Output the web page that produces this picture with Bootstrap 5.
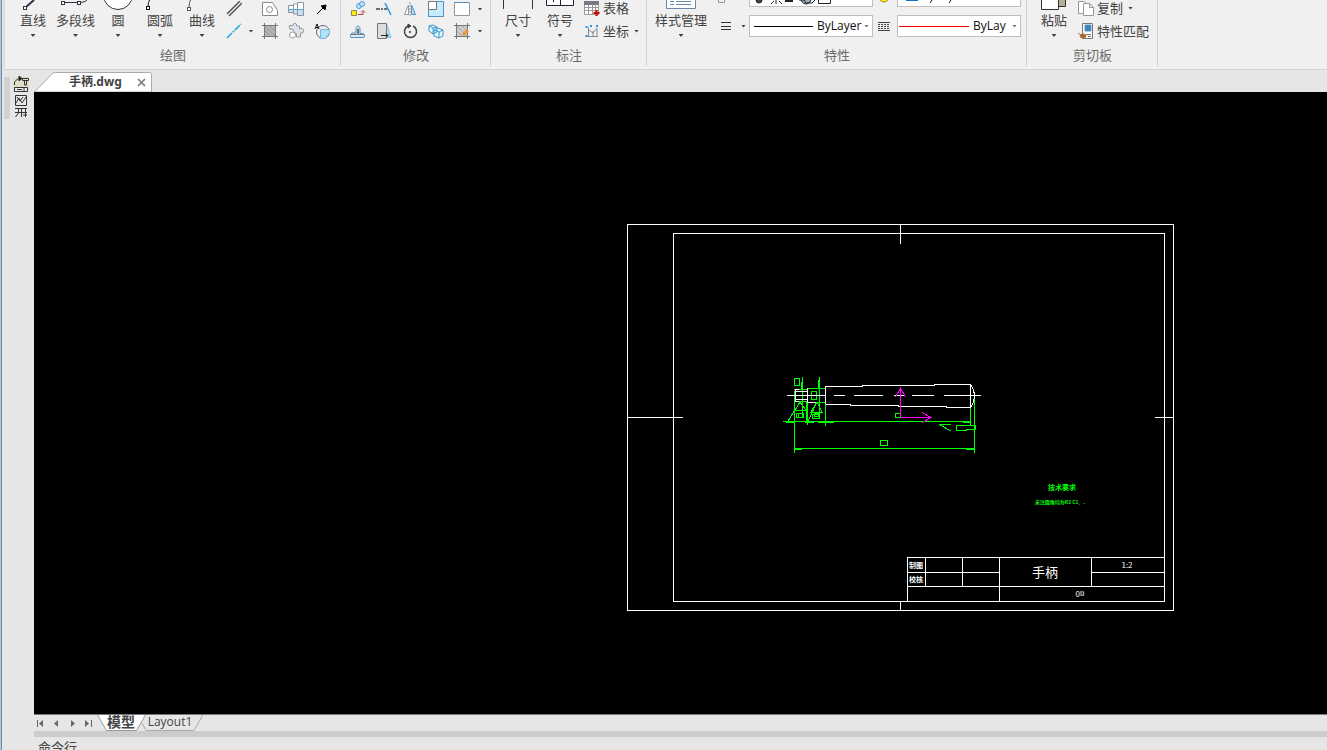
<!DOCTYPE html>
<html lang="zh-CN">
<head>
<meta charset="utf-8">
<meta name="viewport" content="width=device-width, initial-scale=1">
<title>手柄.dwg</title>
<link href="https://cdn.jsdelivr.net/npm/bootstrap@5.3.0/dist/css/bootstrap.min.css" rel="stylesheet">
<style>
body{font:13px/18px "Open Sans","Noto Sans CJK SC",sans-serif;color:#444;background:#e6e6e6}
.app{border-left:1px solid #a9c8f0}
.frame{border-left:1px solid #7c8793}
.ribbon{background:#f0f0f0;border-bottom:1px solid #d4d4d4;border-left:1px solid #d4d4d4;height:70px;margin-left:2px}
.group{position:relative;height:66px;font-family:"Noto Sans CJK SC",sans-serif}
.group::after{content:"";width:1px;height:66px;background:#d2d2d2;position:absolute;right:0;top:0}
.tools{height:46px}
.caption{color:#6a6a6a;text-align:center;line-height:18px}
button{border:0;background:transparent;padding:0;color:#444}
button:hover{background:#dce9f7}
.big{width:42px;display:flex;flex-direction:column;align-items:center;white-space:nowrap}
.big svg{display:block;height:11px;flex:none}
.caret{width:5px;height:3px;background:#444;clip-path:polygon(0 0,100% 0,50% 100%);display:block;flex:none}
.big .caret{margin-top:5px}
.rows{display:grid;grid-template-rows:20px 22px}
.line{display:flex;align-items:flex-start}
.line + .line{align-items:center}
.tool{width:26px;height:18px;display:flex;justify-content:center;align-items:center}
.tool.slim{width:22px}
.drop{width:12px;height:18px;display:flex;justify-content:center;align-items:center}
.wide{display:flex;align-items:center;gap:3px;height:16px;line-height:16px;white-space:nowrap}
.wide .caret{margin-left:2px}
.rows svg{width:16px;height:16px;display:block}
.combo{width:124px;height:22px;border:1px solid #bfbfbf;background:#fff;display:flex;align-items:center;padding:0 3px 0 4px}
.combo select{appearance:none;border:0;background:transparent;padding:0;font:12px/18px "Open Sans",sans-serif;color:#111;min-width:0;outline:0}
.combo.cut{height:7px;border-top:0}
.combo .caret{background:#777;margin-left:auto}
.combo.color{padding-left:1px}
.sample{height:1px;flex:none;margin-right:4px}
.side{width:32px}
.grip{width:6px;height:42px;background:#d2d2d2;margin:7px 2px 0 2px}
.filetab{width:118px;height:20px;margin-top:2px;position:relative;color:#444;font:bold 12px/20px "Noto Sans","Noto Sans CJK SC",sans-serif}
.shape{position:absolute;left:0;top:0}
.filetab a,.filetab button{position:relative;color:#444}
.canvas{background:#000;min-height:0}
.sheets{height:17px;border-top:1px solid #777}
.navs button{width:16px;height:16px;display:flex;align-items:center;justify-content:center}
.sheet{position:relative;display:block;height:16px;color:#444;text-decoration:none;text-align:center;line-height:14px;font-size:12px}
.sheet span{position:relative}
.model{width:50px;margin-left:1px;font:bold 14px/12px "Noto Sans CJK SC",sans-serif;z-index:1;padding-right:2px}
.layout{width:62px;margin-left:-6px;padding-right:4px}
.split{height:6px;background:#ccc}
.command{height:13px;padding:1px 4px;font-family:"Noto Sans CJK SC",sans-serif;overflow:hidden;line-height:18px}
.g{stroke:#0f0}.w{stroke:#fff}.m{stroke:#f0f}
</style>
</head>
<body class="overflow-hidden">
<div class="app vh-100"><div class="frame h-100 d-flex flex-column">
<header class="ribbon d-flex flex-shrink-0 overflow-hidden">
  <section class="group" style="width:336px">
    <div class="tools d-flex" style="padding-left:7px">
      <button class="big"><svg width="28" height="11" fill="none" stroke="#334"><path d="M7 7 15 0" stroke-width="2"/><rect x="4.500" y="6.500" width="3" height="3" fill="#fff"/></svg>直线<i class="caret"></i></button>
      <button class="big" style="width:43px"><svg width="32" height="11" fill="none" stroke="#334"><path d="M3 2.500H20Q26 2.500 28-1"/><rect x="1.500" y="1.500" width="3" height="3" fill="#fff"/><rect x="17.500" y="1.500" width="3" height="3" fill="#fff"/></svg>多段线<i class="caret"></i></button>
      <button class="big"><svg width="32" height="11"><circle cx="16" cy="-5" r="14.500" fill="#fff" stroke="#334"/></svg>圆<i class="caret"></i></button>
      <button class="big"><svg width="32" height="11" fill="none" stroke="#111"><path d="M4 7Q4 2 6-1"/><rect x="2.500" y="6.500" width="3" height="3" fill="#fff"/></svg>圆弧<i class="caret"></i></button>
      <button class="big"><svg width="32" height="11" fill="none" stroke="#556"><path d="M3 7Q3 2 5-1"/><rect x="1.500" y="7.500" width="3" height="3" fill="#fff"/></svg>曲线<i class="caret"></i></button>
      <div class="rows">
        <div class="line">
          <button class="tool slim" aria-label="平行线"><svg viewBox="0 0 16 16" stroke="#555" stroke-width="1.500"><path d="M1 13 14 0M3 15 16 2"/></svg></button><span class="drop"></span>
          <button class="tool" aria-label="轮廓"><svg viewBox="0 0 16 16" fill="#fff" stroke="#888"><path d="M.5 14.500v-13h10l5 8v5z"/><circle cx="7.500" cy="8.500" r="3"/></svg></button>
          <button class="tool" aria-label="轴"><svg viewBox="0 0 16 16" fill="#cfe0f0" stroke="#8a93a0"><path d="M.5 4.500h5v7h-5zM5.500 3h4v10h-4zM9.500 1.500h6v13h-6z"/><path d="M1 5h4v3H1zM6 3.500h3V8H6zM10 2h5v6h-5z" fill="#fff" stroke="none"/><path d="M0 8.500h16" stroke="#5aa5dc"/></svg></button>
          <button class="tool" aria-label="箭头"><svg viewBox="0 0 16 16" stroke="#000"><path d="M3 13 10 6"/><path d="M12 4 7 5l4 4z"/></svg></button>
        </div>
        <div class="line">
          <button class="tool slim" aria-label="中心线"><svg viewBox="0 0 16 16" stroke="#16a5e0" stroke-width="1.500" stroke-dasharray="7 1 2 1"><path d="M1 15 15 1"/></svg></button><button class="drop" aria-label="更多线"><i class="caret"></i></button>
          <button class="tool" aria-label="剖面线"><svg viewBox="0 0 16 16" stroke="#777" fill="#b4b4b4"><path d="M2.500 2.500h11v11h-11zM0 2.500h16M0 13.500h16M2.500 0v16M13.500 0v16"/><path d="m3 3 10 10M3 8l5 5M8 3l5 5" stroke="#999"/></svg></button>
          <button class="tool" aria-label="零件"><svg viewBox="0 0 16 16" fill="#dce3ec" stroke="#999"><path d="M1.500 5V2.500H5Q5-1 8.500 1V3h3v3q4-2 4 2 0 3-3 2v4H8.500v-3Q5 8 4.500 6 1 7 1.500 5z"/><circle cx="4.500" cy="12" r="3" fill="#fff"/></svg></button>
          <button class="tool" aria-label="局部放大"><svg viewBox="0 0 16 16" fill="none" stroke="#667"><circle cx="9" cy="9" r="6.500"/><path d="M6.500 6.500h9v4l-4 5h-5z" fill="#b5e1f8" stroke="#7bb9dc"/><path d="M1 6 3 1l2 5M2 4.500h2" stroke="#111"/></svg></button>
        </div>
      </div>
    </div>
    <div class="caption">绘图</div>
  </section>

  <section class="group" style="width:150px">
    <div class="tools d-flex" style="padding-left:4px"><div class="rows">
      <div class="line">
        <button class="tool" aria-label="复制"><svg viewBox="0 0 16 16" fill="#bfe0fa" stroke="#4b9fd8"><circle cx="9" cy="5" r="2.500"/><circle cx="12" cy="3" r="2.500"/><path d="M1.500 9.500h5v5h-5z" fill="#fe0" stroke="#886"/><path d="M8 13.500h5v-3m-2 1 2-2 2 2" fill="none" stroke="#a43"/></svg></button>
        <button class="tool" aria-label="延伸"><svg viewBox="0 0 16 16" fill="none" stroke="#444"><path d="M0 8h4m1 0h2m1 0h3" stroke-width="1.500"/><path d="M9 2 15 14" stroke="#2893df" stroke-width="1.500"/></svg></button>
        <button class="tool" aria-label="镜像"><svg viewBox="0 0 16 16" fill="#fff" stroke="#999"><path d="M6.500 4v9.500h-4z"/><path d="M9.500 4v9.500h4z" fill="#b5dcf5" stroke="#5195c0"/><path d="M8 1v14" stroke-dasharray="2 1"/></svg></button>
        <button class="tool" aria-label="缩放"><svg viewBox="0 0 16 16" fill="#c6ebff" stroke="#5592bd"><path d="M.5.5h15v15H.5z"/><path d="M.5.5h8v8h-8z" fill="#fff" stroke="#777"/></svg></button>
        <button class="tool" aria-label="矩形"><svg viewBox="0 0 16 16" fill="#fff" stroke="#777"><path d="M.5 1.500h15v13H.5z" stroke="#999"/><path d="M.5 1.500h15" stroke="#338bc5" stroke-dasharray="2 1"/></svg></button>
        <button class="drop" style="width:10px" aria-label="更多修改"><i class="caret"></i></button>
      </div>
      <div class="line">
        <button class="tool" aria-label="偏移"><svg viewBox="0 0 16 16" fill="#d5edfb" stroke="#5592bd"><path d="M1 14.500h13q2-3-1-4h-3V5Q8 1 6 5v5H2q-3 2-1 4.500z"/><path d="M1 11.500h6.500V6h1v5.500H14" stroke="#777" fill="none"/></svg></button>
        <button class="tool" aria-label="拉伸"><svg viewBox="0 0 16 16" fill="#b5e3fb" stroke="#67a"><path d="M7 1.500h4l4 13H7z" stroke="#7cc3e8"/><path d="M1.500.5h9v15h-9z" fill="#ddd" stroke="#777"/><path d="M5 12.500h7m-2-2 2 2-2 2" stroke="#222" fill="none"/></svg></button>
        <button class="tool" aria-label="旋转"><svg viewBox="0 0 16 16" fill="none" stroke="#444" stroke-width="1.500"><path d="M6 3a6 6 0 1 0 5 0"/><path d="M6 1v4l3-2z" fill="#333" stroke-width="1"/><circle cx="8" cy="9" r="1" fill="#333" stroke="none"/></svg></button>
        <button class="tool" aria-label="阵列"><svg viewBox="0 0 16 16" fill="#e5f6ff" stroke="#3998d2"><path d="m1 3 4-1 4 2v5l-4 2-4-3zM1 3l4 2v6M5 5l4-1M6 7l4-2 5 2v6l-4 2-5-2zM6 7l5 2v6M11 9l4-2"/></svg></button>
        <button class="tool" aria-label="编辑填充"><svg viewBox="0 0 16 16" stroke="#777" fill="#ccc"><path d="M2.500 2.500h11v11h-11zM0 2.500h16M0 13.500h16M2.500 0v16M13.500 0v16"/><path d="M3 3l10 10M3 8l5 5M8 3l5 5" stroke="#aaa"/><path d="m9 12 5-5" stroke="#e59b2d" stroke-width="3"/></svg></button>
        <button class="drop" style="width:10px" aria-label="更多编辑"><i class="caret"></i></button>
      </div>
    </div></div>
    <div class="caption">修改</div>
  </section>

  <section class="group" style="width:156px">
    <div class="tools d-flex" style="padding-left:6px">
      <button class="big"><svg width="32" height="11" stroke="#334"><path d="M1.500 0v9M30.500 0v9"/></svg>尺寸<i class="caret"></i></button>
      <button class="big"><svg width="28" height="11" fill="#fff" stroke="#223"><path d="M.5-3v8.500h27V-3M7.500 0v2M14.500 0v5"/></svg>符号<i class="caret"></i></button>
      <div class="rows" style="margin-left:3px">
        <div class="line"><button class="wide"><svg viewBox="0 0 16 16" fill="#fff" stroke="#999"><path d="M.5 1.500h14v13H.5zM.5 7.500h14M.5 10.500h14M4.500 4v10M8.500 4v10M11.500 4v10"/><path d="M0 1h15v4H0z" fill="#778" stroke="none"/><path d="M12.500 10v6M9.500 13h6" stroke="#c00" stroke-width="2"/></svg>表格</button></div>
        <div class="line"><button class="wide"><svg viewBox="0 0 16 16" fill="none" stroke="#888"><path d="M4.500 4v9M2 13.500h12M5 7l4 3 4-5M9 8v6M13 6v8"/><path d="M2.500 3v2M7 2v2M13 2v2M2.500 12v2" stroke="#2893df" stroke-width="2"/></svg>坐标<i class="caret"></i></button></div>
      </div>
    </div>
    <div class="caption">标注</div>
  </section>

  <section class="group" style="width:380px">
    <div class="tools d-flex" style="padding-left:4px">
      <button class="big" style="width:60px"><svg width="30" height="11" fill="#fff" stroke="#6b88a5"><path d="M.5-3V8.500h29V-3M4 1.500h4M10 1.500h15M4 4.500h4M10 4.500h15"/></svg>样式管理<i class="caret"></i></button>
      <div class="d-flex flex-column" style="width:38px">
        <svg width="30" height="15" fill="none" stroke="#999"><path d="M7.500 0v2.500h6V0"/></svg>
        <div class="d-flex"><button class="tool" style="width:30px;height:22px" aria-label="线宽"><svg width="10" height="10" stroke="#333"><path d="M0 1.500h10M0 5.500h10M0 8.500h10"/></svg></button><button class="drop" style="width:5px;height:22px" aria-label="线宽选项"><i class="caret"></i></button></div>
      </div>
      <div class="d-flex flex-column gap-2">
        <div class="d-flex"><div class="combo cut"><svg width="80" height="6" stroke="#222" fill="#9ab"><circle cx="5" cy="0" r="3" fill="#444"/><path d="M17 4l3-3m5 0 3 3M22 0v4"/><path d="M31 1h8" stroke-width="2"/><circle cx="52" cy="-1" r="5"/><path d="M45 0h5l2 3h6l3-3" fill="none"/><path d="M64.500-3v6.500h12V-3" fill="#fff"/></svg></div>
          <svg width="24" height="7"><circle cx="11" cy="-3" r="5" fill="#fe0" stroke="#a83"/></svg>
          <div class="combo cut"><svg width="80" height="6" stroke="#111" fill="none"><path d="M4 0h12" stroke="#1070d0" stroke-width="2"/><path d="m28 3 2-3M47 3l2-3"/></svg></div></div>
        <div class="d-flex align-items-center"><div class="combo"><span class="sample" style="background:#000;width:59px"></span><select aria-label="线型" style="width:45px"><option>ByLayer</option></select><i class="caret"></i></div>
          <svg width="24" height="14" stroke="#444"><path d="M5 3.500h12M5 11.500h12"/><path d="M5 5.500h12M5 7.500h12M5 9.500h12" stroke-dasharray="2 1"/></svg>
          <div class="combo color"><span class="sample" style="background:red;width:70px"></span><select aria-label="颜色" style="width:33px"><option>ByLayer</option></select><i class="caret"></i></div></div>
      </div>
    </div>
    <div class="caption">特性</div>
  </section>

  <section class="group" style="width:131px">
    <div class="tools d-flex" style="padding-left:6px">
      <button class="big"><svg width="28" height="11" fill="#b8ad99" stroke="#333"><path d="M14.500-2h11v8.500h-11z"/><path d="M1.500-2h17V9.500h-17z" fill="#fff"/></svg>粘贴<i class="caret"></i></button>
      <div class="rows" style="margin-left:3px">
        <div class="line"><button class="wide"><svg viewBox="0 0 16 16" fill="#fff" stroke="#999"><path d="M.5 1.500h6l3 3v9h-9z"/><path d="M5.500 3.500h6l4 4v8h-10zM11.500 3.500v4h4"/></svg>复制<i class="caret"></i></button></div>
        <div class="line"><button class="wide"><svg viewBox="0 0 16 16" fill="#fff" stroke="#777"><path d="M4.500.5h10v15h-10z"/><path d="M7 2h6v6H7z" fill="#3c81b8" stroke="#5c95c0"/><path d="M8 11.500h5M10 13.500h3"/><ellipse cx="5" cy="13" rx="3" ry="2" fill="#b85f22" stroke="#a74"/><path d="m0 10 3 2" stroke="#a75"/></svg>特性匹配</button></div>
      </div>
    </div>
    <div class="caption">剪切板</div>
  </section>
</header>

<main class="d-flex flex-grow-1" style="min-height:0">
  <aside class="side d-flex flex-shrink-0"><div class="grip"></div>
    <svg width="18" height="50" fill="none" stroke="#333"><path d="M1 7h16v15H1z" fill="#dedecb" stroke="none"/><path d="M2.500 15v-3l3-3h3"/><path d="M7 6v5l3-2.500z" fill="#111"/><path d="M10.500 8.500h6v2h-6zM12.500 11v4h2v-4"/><path d="M2.500 17.500h13v4h-13zM5 19.500h5M12 18v3" fill="#eee"/><path d="M3.500 25.500h11v10h-11zM4 33l3-5 3 5 4-6M5 27l3 4 3-4M3 38.500h12M3 42.500h12M6.500 38v5l-3 4M9.500 38v9M13.500 38v9M11 45h4"/></svg>
  </aside>
  <div class="d-flex flex-column flex-grow-1" style="min-width:0">
    <nav class="filetab d-flex flex-shrink-0"><svg class="shape" width="118" height="20"><path d="M.5 20 17.500 2.500Q19 .5 21.500.5h94q2 0 2 2V20z" fill="#fff" stroke="#aaa"/></svg>
      <a href="#" class="text-decoration-none" style="margin-left:35px">手柄.dwg</a><button class="ms-auto" style="margin-right:5px" aria-label="关闭"><svg class="d-block" width="12" height="12" stroke="#777" stroke-width="1.500"><path d="m3 3 7 7m0-7-7 7"/></svg></button></nav>
    <div class="canvas flex-grow-1">
      <svg class="d-block w-100 h-100" viewBox="34 92 1293 622" fill="none" shape-rendering="crispEdges">
        <g class="g">
          <path d="M794.500 391v62M974.500 395v58M970.500 408v18M794 448.500h181M783 421.500h187M795 449.500h7M966 449.500h8M786 422.500h8M805 422.500h9M818 422.500h16M963 422.500h7M807.500 388v37M806.500 402v21M825.500 386v40M802.500 377v41M801.500 382v7M819.500 377v41M818.500 380v9M794 389.500h13M807 388.500h18M794 401.500h13M807 402.500h18M794.500 378.500h5v7h-5zM811.500 391.500h5v8h-5zM796.500 413.500h7v4h-7zM798.500 414v3M812.500 414.500h7v4h-7zM814.500 413.500h4v3h-4zM800 402l-5 8h11zM800 402l-12 19M817 402l-6 10h11zM817 402l-9 19M880.500 440.500h7v5h-7zM895.500 413.500h5v4h-5zM939 424.500h12M940 425l11 6M956.500 425.500h19v4h-9v1h-10z"/>
        </g>
        <g class="w">
          <path d="M627.500 224.500h546v386h-546zM673.500 233.500h491v368h-491zM900.500 224v20M900.500 601v9M627 417.500h56M1155 417.500h18M907.500 601v-43.500h257M907.500 572.500h92M1091.500 572.500h73M907.500 586.500h257M925.500 557v29M962.500 557v29M999.500 557v44M1091.500 557v29"/>
          <path d="M787 395.500h39M834 395.500h11M854 395.500h29M894 395.500h10M912 395.500h13M924 395.500h10M944 395.500h37M795.500 389v12M796 391.500h11M796 399.500h11M795 389.500h4M795 401.500h4M807.500 388v14M807 402.500h9M825.500 404v-17.500h37v-1h72v-1h36l3 5 1 6-1 7-3 5M970.500 384v24M826 404.500h24v1h48v1h48v1h25"/>
        </g>
        <path class="m" d="M900.500 416v-29m-5 10 5-9 5 9M900 417.500h31m-9-5 9 5-9 5"/>
        <g font-family="Noto Sans CJK SC, sans-serif" fill="#fff" text-anchor="middle">
          <text x="1045" y="577" font-size="13">手柄</text>
          <g font-size="7" font-weight="700"><text x="916" y="568">制图</text><text x="916" y="582">校核</text></g>
          <g font-size="8"><text x="1127" y="568">1:2</text><text x="1080" y="597">0¤</text></g>
          <g fill="#0f0" font-weight="700"><text x="1062" y="490" font-size="7">技术要求</text><text x="1060" y="504" font-size="5">未注圆角均为R2 C1。.</text></g>
        </g>
      </svg>
    </div>
  </div>
</main>
<footer class="flex-shrink-0" style="margin-left:32px">
  <div class="sheets d-flex">
    <div class="navs d-flex" style="margin-left:-2px">
      <button aria-label="首页"><svg width="8" height="8" fill="#666"><path d="M1 1h1v7H1zM7 1v7L3 4.500z"/></svg></button>
      <button aria-label="上一页"><svg width="8" height="8" fill="#666"><path d="M6 1v7L2 4.500z"/></svg></button>
      <button aria-label="下一页"><svg width="8" height="8" fill="#666"><path d="M3 1v7l4-3.500z"/></svg></button>
      <button aria-label="末页"><svg width="8" height="8" fill="#666"><path d="M1 1v7l4-3.500zM7 1h1v7H7z"/></svg></button>
    </div>
    <a href="#" class="sheet model"><svg class="shape" width="50" height="16"><path d="M.5 0 9.500 15.500h30L48.500 0" fill="#fff" stroke="#999"/></svg><span>模型</span></a>
    <a href="#" class="sheet layout"><svg class="shape" width="62" height="16"><path d="m1 8 4 7.500h48L62 0" fill="none" stroke="#aaa"/></svg><span>Layout1</span></a>
  </div>
  <div class="split"></div>
  <div class="command">命令行</div>
</footer>
</div></div>
<script src="https://cdn.jsdelivr.net/npm/bootstrap@5.3.0/dist/js/bootstrap.bundle.min.js"></script>
</body>
</html>
